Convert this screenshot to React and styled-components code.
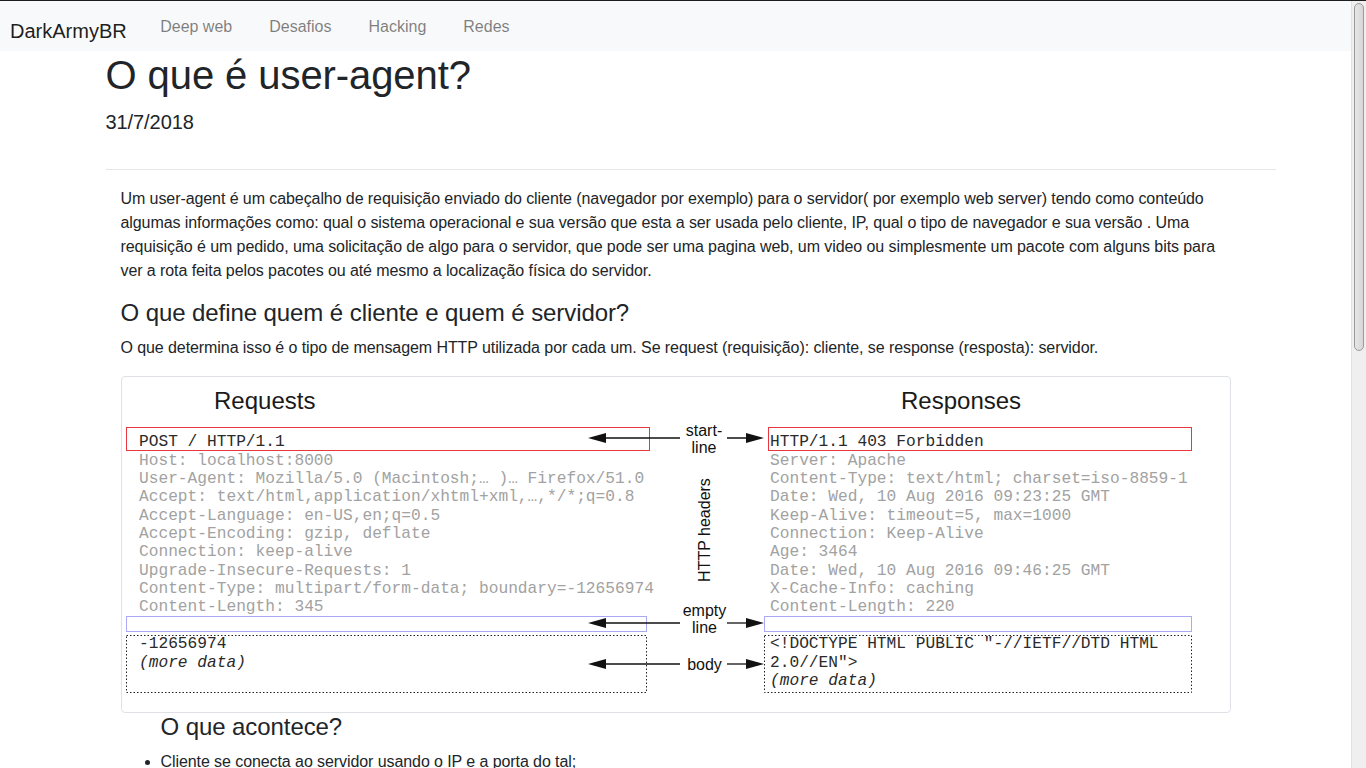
import React from "react";
import styled, { createGlobalStyle } from "styled-components";

const GlobalStyle = createGlobalStyle`
  html {
    border-top: 1px solid #1d1d1d;
  }
  body {
    margin: 0 15px 0 0;
    font-family: "Liberation Sans", Helvetica, Arial, sans-serif;
    font-size: 16px;
    line-height: 1.5;
    letter-spacing: -0.005em;
    color: #212529;
    background: #fff;
  }
`;

/* the page in the shot is scrolled content: the window shows its scrollbar */
const ScrollTrack = styled.div`
  position: fixed;
  top: 1px;
  right: 0;
  width: 15px;
  height: 100vh;
  background: #efefef;
  border-left: 1px solid #e2e2e2;
  box-sizing: border-box;
`;

const ScrollThumb = styled.div`
  margin: 2px 2px 0 2px;
  height: 346px;
  border: 1px solid #9a9a9a;
  border-radius: 6px;
  background: linear-gradient(to right, #e6e6e6, #d6d6d6);
`;

const Navbar = styled.nav`
  display: flex;
  align-items: flex-start;
  height: 50px;
  background: #f8f9fa;
  letter-spacing: 0;
`;

const Brand = styled.a`
  padding: 15px 0 0 10px;
  margin-right: 15px;
  font-size: 20px;
  line-height: 30px;
  color: rgba(0, 0, 0, 0.9);
  text-decoration: none;
`;

const NavLink = styled.a`
  padding: 14px 18.5px 0;
  font-size: 16px;
  line-height: 24px;
  color: rgba(0, 0, 0, 0.5);
  text-decoration: none;
`;

const Page = styled.main`
  width: 1170px;
  margin-left: calc(50% - 570px);
  padding-bottom: 60px;
`;

const Title = styled.h1`
  margin: 0 0 10px;
  font-size: 40px;
  font-weight: 500;
  line-height: 1.2;
`;

const DateLine = styled.h5`
  margin: 0;
  padding-top: 1px;
  font-size: 20px;
  font-weight: 400;
  line-height: 24px;
`;

const Divider = styled.hr`
  margin: 35px 0 17px;
  border: 0;
  border-top: 1px solid #e6e6e6;
`;

const Article = styled.article`
  width: 1110px;
  padding-left: 15px;
`;

const Paragraph = styled.p`
  margin: 0 0 16px;
`;

const SubTitle = styled.h3`
  margin: 0 0 8px;
  font-size: 24px;
  font-weight: 500;
  line-height: 1.2;
`;

const Figure = styled.figure`
  box-sizing: border-box;
  width: 1110px;
  height: 337px;
  margin: 0;
  border: 1px solid #dee2e6;
  border-radius: 4px;
  overflow: hidden;
  letter-spacing: 0;

  svg {
    display: block;
  }
`;

const Steps = styled.section`
  padding-left: 40px;
`;

const StepsTitle = styled.h4`
  margin: 0 0 8px;
  font-size: 24px;
  font-weight: 500;
  line-height: 1.2;
`;

const StepList = styled.ul`
  margin: 0 0 16px;
  padding-left: 0;
`;

const Code = styled.pre`
  margin: 0 0 16px;
  padding: 12px 16px;
  background: #f8f9fa;
  border: 1px solid #e6e6e6;
  border-radius: 4px;
  font-family: "Liberation Mono", "Courier New", monospace;
  font-size: 14px;
  letter-spacing: 0;
  white-space: pre-wrap;
`;

/* diagram parts */
const Heading = styled.text`
  font-family: "Liberation Sans", Arial, sans-serif;
  font-size: 24px;
  fill: #1a1a1a;
`;

const Label = styled.text`
  font-family: "Liberation Sans", Arial, sans-serif;
  font-size: 16px;
  fill: #111;
  text-anchor: middle;
`;

const Mono = styled.text`
  font-family: "Liberation Mono", "Courier New", monospace;
  font-size: 16.2px;
  white-space: pre;
  fill: ${(p) => (p.$dim ? "#a2a2a2" : "#2a2a2a")};
  font-style: ${(p) => (p.$italic ? "italic" : "normal")};
`;

const Frame = styled.rect`
  fill: none;
  stroke: ${(p) => p.$color};
  stroke-width: 1;
  stroke-dasharray: ${(p) => (p.$dotted ? "1.5 2" : "none")};
`;

const requestHeaders = [
  "Host: localhost:8000",
  "User-Agent: Mozilla/5.0 (Macintosh;… )… Firefox/51.0",
  "Accept: text/html,application/xhtml+xml,…,*/*;q=0.8",
  "Accept-Language: en-US,en;q=0.5",
  "Accept-Encoding: gzip, deflate",
  "Connection: keep-alive",
  "Upgrade-Insecure-Requests: 1",
  "Content-Type: multipart/form-data; boundary=-12656974",
  "Content-Length: 345",
];

const responseHeaders = [
  "Server: Apache",
  "Content-Type: text/html; charset=iso-8859-1",
  "Date: Wed, 10 Aug 2016 09:23:25 GMT",
  "Keep-Alive: timeout=5, max=1000",
  "Connection: Keep-Alive",
  "Age: 3464",
  "Date: Wed, 10 Aug 2016 09:46:25 GMT",
  "X-Cache-Info: caching",
  "Content-Length: 220",
];

const LEFT_X = 139;
const RIGHT_X = 770;
const firstHeader = 464.7;
const step = 18.33;

const Arrows = ({ y }) => (
  <g>
    <line x1="604" y1={y} x2="680" y2={y} stroke="#111" strokeWidth="1.3" />
    <polygon points={`588,${y} 606,${y - 5} 606,${y + 5}`} fill="#111" />
    <line x1="727" y1={y} x2="748" y2={y} stroke="#111" strokeWidth="1.3" />
    <polygon points={`764,${y} 746,${y - 5} 746,${y + 5}`} fill="#111" />
  </g>
);

const HttpDiagram = () => (
  <svg width="1108" height="335" viewBox="122 377 1108 335">
    <Heading x="214" y="409">Requests</Heading>
    <Heading x="901" y="409">Responses</Heading>

    <Frame x="126.5" y="427.5" width="523" height="23" $color="#e8383d" />
    <Frame x="768.5" y="427.5" width="423" height="23" $color="#e8383d" />
    <Frame x="126.5" y="616.5" width="520" height="15" $color="#a9a9f5" />
    <Frame x="764.5" y="616.5" width="427" height="15" $color="#a9a9f5" />
    <Frame x="126.5" y="635.5" width="520" height="57" $color="#222" $dotted />
    <Frame x="764.5" y="635.5" width="427" height="57" $color="#222" $dotted />

    <Mono x={LEFT_X} y="446.4">POST / HTTP/1.1</Mono>
    {requestHeaders.map((line, i) => (
      <Mono key={line} x={LEFT_X} y={firstHeader + i * step} $dim>
        {line}
      </Mono>
    ))}
    <Mono x={LEFT_X} y="648">-12656974</Mono>
    <Mono x={LEFT_X} y="666.5" $italic>
      (more data)
    </Mono>

    <Mono x={RIGHT_X} y="446.4">HTTP/1.1 403 Forbidden</Mono>
    {responseHeaders.map((line, i) => (
      <Mono key={line} x={RIGHT_X} y={firstHeader + i * step} $dim>
        {line}
      </Mono>
    ))}
    <Mono x={RIGHT_X} y="648">{'<!DOCTYPE HTML PUBLIC "-//IETF//DTD HTML'}</Mono>
    <Mono x={RIGHT_X} y="666.5">{'2.0//EN">'}</Mono>
    <Mono x={RIGHT_X} y="685" $italic>
      (more data)
    </Mono>

    <Label x="704" y="436">start-</Label>
    <Label x="704" y="453">line</Label>
    <Label transform="translate(710 530) rotate(-90)">HTTP headers</Label>
    <Label x="704.5" y="616">empty</Label>
    <Label x="704.5" y="633">line</Label>
    <Label x="704.5" y="670">body</Label>

    <Arrows y={438} />
    <Arrows y={623} />
    <Arrows y={664} />
  </svg>
);

const steps = [
  "Cliente se conecta ao servidor usando o IP e a porta do tal;",
  "Cliente envia a requisição (request) com o cabeçalho user-agent;",
  "Servidor lê o cabeçalho e descobre qual o sistema e o navegador do cliente;",
  "Servidor processa a requisição e envia a resposta (response);",
  "A conexão é encerrada ou mantida aberta (keep-alive).",
];

export default function App() {
  return (
    <>
      <GlobalStyle />
      <ScrollTrack>
        <ScrollThumb />
      </ScrollTrack>
      <Navbar>
        <Brand href="#">DarkArmyBR</Brand>
        <NavLink href="#">Deep web</NavLink>
        <NavLink href="#">Desafios</NavLink>
        <NavLink href="#">Hacking</NavLink>
        <NavLink href="#">Redes</NavLink>
      </Navbar>
      <Page>
        <Title>O que é user-agent?</Title>
        <DateLine>31/7/2018</DateLine>
        <Divider />
        <Article>
          <Paragraph>
            Um user-agent é um cabeçalho de requisição enviado do cliente
            (navegador por exemplo) para o servidor( por exemplo web server)
            tendo como conteúdo algumas informações como: qual o sistema
            operacional e sua versão que esta a ser usada pelo cliente, IP,
            qual o tipo de navegador e sua versão . Uma requisição é um pedido,
            uma solicitação de algo para o servidor, que pode ser uma pagina
            web, um video ou simplesmente um pacote com alguns bits para ver a
            rota feita pelos pacotes ou até mesmo a localização física do
            servidor.
          </Paragraph>
          <SubTitle>O que define quem é cliente e quem é servidor?</SubTitle>
          <Paragraph>
            O que determina isso é o tipo de mensagem HTTP utilizada por cada
            um. Se request (requisição): cliente, se response (resposta):
            servidor.
          </Paragraph>
          <Figure>
            <HttpDiagram />
          </Figure>
          <Steps>
            <StepsTitle>O que acontece?</StepsTitle>
            <StepList>
              {steps.map((s) => (
                <li key={s}>{s}</li>
              ))}
            </StepList>
          </Steps>
          <SubTitle>Como ver o seu user-agent?</SubTitle>
          <Paragraph>
            Qualquer página que mostre os cabeçalhos da requisição serve. Um
            exemplo de user-agent enviado por um navegador:
          </Paragraph>
          <Code>
            Mozilla/5.0 (X11; Linux x86_64; rv:61.0) Gecko/20100101
            Firefox/61.0
          </Code>
          <Paragraph>
            Nele aparecem o nome do navegador, a versão, o motor de
            renderização e o sistema operacional. Com essas informações o
            servidor pode escolher qual versão da pagina vai entregar, por
            exemplo uma versão para celular ou para computador.
          </Paragraph>
          <SubTitle>Para que serve no hacking?</SubTitle>
          <Paragraph>
            Como o user-agent é enviado pelo próprio cliente, ele pode ser
            alterado. Assim é possível se passar por outro navegador, por um
            celular ou até por um robô de busca, e ver como o servidor responde
            a cada um.
          </Paragraph>
          <Paragraph>
            Algumas ferramentas de varredura deixam o seu nome no user-agent,
            então muitos servidores bloqueiam requisições que tenham esses
            valores. Trocar o cabeçalho é um dos primeiros passos para não ser
            identificado.
          </Paragraph>
          <Code>curl -A "Mozilla/5.0 (Windows NT 10.0; Win64; x64)" http://localhost:8000</Code>
          <SubTitle>Conclusão</SubTitle>
          <Paragraph>
            O user-agent é só um texto, mas diz muito sobre quem está do outro
            lado. Saber ler e alterar esse cabeçalho ajuda a entender como a
            comunicação entre cliente e servidor funciona.
          </Paragraph>
          <Paragraph>
            Nos próximos posts vamos ver outros cabeçalhos HTTP e como eles
            podem ser usados.
          </Paragraph>
          <Paragraph>Até a próxima!</Paragraph>
        </Article>
      </Page>
    </>
  );
}
